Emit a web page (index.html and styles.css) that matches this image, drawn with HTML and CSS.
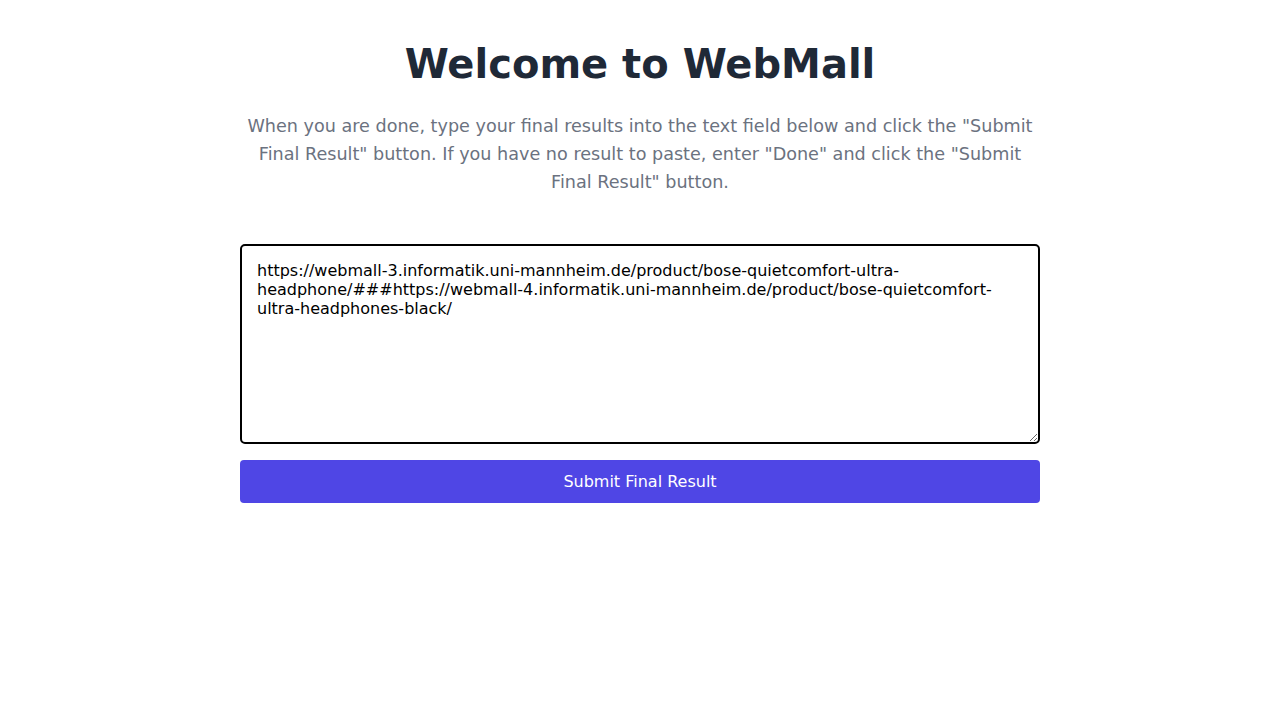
FILE: index.html
```html
<!DOCTYPE html>
<html>
<head>
<meta charset="utf-8">
<link rel="stylesheet" href="styles.css">
</head>
<body>
<main class="container">
  <h1 class="title">Welcome to WebMall</h1>
  <p class="intro">When you are done, type your final results into the text field below and click the "Submit Final Result" button. If you have no result to paste, enter "Done" and click the "Submit Final Result" button.</p>
  <form class="form">
    <textarea class="result" autofocus>https://webmall-3.informatik.uni-mannheim.de/product/bose-quietcomfort-ultra-headphone/###https://webmall-4.informatik.uni-mannheim.de/product/bose-quietcomfort-ultra-headphones-black/</textarea>
    <button type="button" class="submit">Submit Final Result</button>
  </form>
</main>
</body>
</html>
```
FILE: styles.css
```css
html, body {
  margin: 0;
  padding: 0;
  background: #ffffff;
  font-family: "DejaVu Sans", sans-serif;
}
.container {
  width: 800px;
  margin: 0 auto;
  padding-top: 40px;
  text-align: center;
}
.title {
  margin: 0;
  font-size: 40px;
  line-height: 48px;
  font-weight: bold;
  color: #1f2937;
}
.intro {
  margin: 24px 0 0;
  font-size: 17.6px;
  line-height: 28px;
  color: #6b7280;
}
.form {
  margin-top: 48px;
  display: flex;
  flex-direction: column;
  gap: 16px;
}
.result {
  box-sizing: border-box;
  width: 800px;
  height: 200px;
  padding: 15px;
  border: 2px solid #000;
  border-radius: 5px;
  outline: none;
  font-family: "DejaVu Sans", sans-serif;
  font-size: 16px;
  line-height: 19px;
  color: #000;
  caret-color: #000;
  resize: vertical;
}
.submit {
  height: 43px;
  border: none;
  border-radius: 4px;
  background: #4f46e5;
  color: #ffffff;
  font-family: "DejaVu Sans", sans-serif;
  font-size: 16px;
  cursor: pointer;
}
```
